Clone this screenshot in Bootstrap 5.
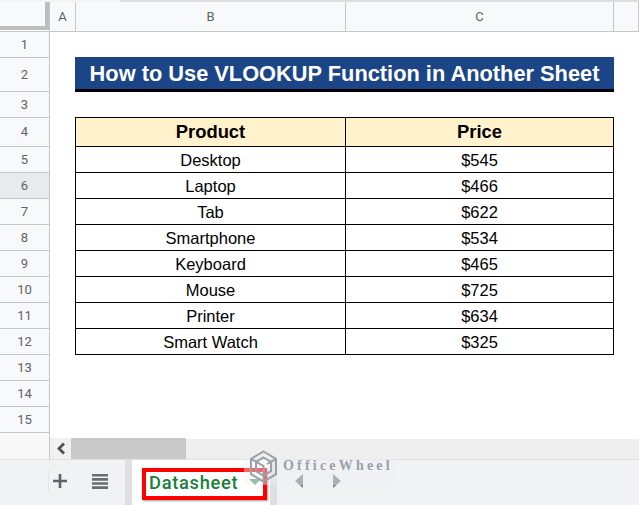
<!DOCTYPE html>
<html lang="en">
<head>
<meta charset="utf-8">
<title>Datasheet</title>
<link href="https://cdn.jsdelivr.net/npm/bootstrap@5.3.0/dist/css/bootstrap.min.css" rel="stylesheet">
<style>
html,body{margin:0;height:505px;width:639px;overflow:hidden;background:#fff}
body{font-family:"Liberation Sans",Arial,sans-serif}
.shell{width:639px;height:505px;position:relative;overflow:hidden}
.topedge{height:2px}
.topedge-left{width:120px;background:#f4f4f4}
.topedge-right{background:#dfdfdf}
.sheetgrid{display:grid;grid-template-columns:50px 26px 270px 268px 25px;grid-template-rows:30px 26px 34px 26px 29px repeat(8,26px) 26px 26px 26px 6px;height:436px}
.sheetgrid>div{display:flex;align-items:center;justify-content:center;min-width:0}
.sheetgrid>.corner{background:#fff;border-right:1px solid #c7c7c7;border-bottom:1px solid #c7c7c7;align-items:flex-start;justify-content:flex-start}
.corner-inner{width:49px;height:28px;background:#f8f9fa;border-right:4px solid #bdbdbd;border-bottom:4px solid #bdbdbd}
.colh,.rowh{background:#f8f9fa;border-right:1px solid #c7c7c7;border-bottom:1px solid #c7c7c7;color:#5f6368;font-size:13px;font-family:"Roboto","Liberation Sans",sans-serif}
.rowh.sel{background:#e8eaed}
.blank{background:#fff}
.sheetgrid>.banner{grid-column:span 2;background:#1c4587;color:#fff;font-weight:700;font-size:21.8px;border-bottom:3px solid #000;white-space:nowrap;margin:-1px 0 0 -1px;padding-top:3px;z-index:1}
.sheetgrid>.headcell{background:#fff2cc;font-weight:700;font-size:18.4px;color:#000;border:1px solid #000;margin-top:-1px;z-index:1}
.sheetgrid>.datacell{font-size:16.5px;color:#000;border:1px solid #000;border-top:0;padding-top:1px;z-index:1}
.sheetgrid>.lead-cell{margin-left:-1px}
.sheetgrid>.headcell+.headcell,.sheetgrid>.datacell+.datacell{border-left:0}
.scrollrow{height:21px;background:#eee}
.scrollgap{width:50px;background:#f8f8f8;border-right:1px solid #c7c7c7}
.scrollarrow{width:21px;background:#f1f1f1}
.scrollthumb{width:115px;background:#c9c9c9}
.tabbar{height:46px;background:#f0f2f4;border-top:1px solid #e0e0e0;padding-top:0}
.tabtools{width:125px;height:100%;padding:0 0 3px 53px;gap:25px;position:relative}
.tabmark{width:1px;height:21px;background:#dbe6f4;position:absolute;left:48px;top:10px}
.tabspacer{width:7px;background:#dedfe0;align-self:stretch}
.sheettab{width:138px;align-self:stretch;background:#fff;padding:9px 0 0 17px;color:#188038;font-size:18.3px;font-weight:500;line-height:28px;font-family:"Roboto","Liberation Sans",sans-serif;letter-spacing:.7px}
.caret-tab{width:0;height:0;border-left:6px solid transparent;border-right:6px solid transparent;border-top:6px solid #4fa066;margin:10px 0 0 11px}
.redframe{position:absolute;left:142px;top:468px;width:125px;height:32px;border:4px solid #f00;box-shadow:1px 1px 2px #999;pointer-events:none}
.navarrows{gap:30px;padding:0 0 3px 18px;height:100%}
.mark-wm{position:absolute;left:244px;top:447px;width:150px;height:38px;background:rgba(240,241,243,.42);gap:5px;padding-left:5px}
.wm-text{font-family:"Liberation Serif",serif;font-size:14px;letter-spacing:3.2px;color:#8d929b;font-weight:700;opacity:.85;position:relative;top:-1px}
</style>
</head>
<body>
<div class="shell">
<div class="topedge d-flex"><div class="topedge-left"></div><div class="topedge-right flex-fill"></div></div>
<div class="sheetgrid">
<div class="corner"><div class="corner-inner"></div></div><div class="colh">A</div><div class="colh">B</div><div class="colh">C</div><div class="colh"></div>
<div class="rowh">1</div><div class="blank"></div><div class="blank"></div><div class="blank"></div><div class="blank"></div>
<div class="rowh">2</div><div class="blank"></div><div class="banner">How to Use VLOOKUP Function in Another Sheet</div><div class="blank"></div>
<div class="rowh">3</div><div class="blank"></div><div class="blank"></div><div class="blank"></div><div class="blank"></div>
<div class="rowh">4</div><div class="blank"></div><div class="headcell lead-cell">Product</div><div class="headcell">Price</div><div class="blank"></div>
<div class="rowh">5</div><div class="blank"></div><div class="datacell lead-cell">Desktop</div><div class="datacell">$545</div><div class="blank"></div>
<div class="rowh sel">6</div><div class="blank"></div><div class="datacell lead-cell">Laptop</div><div class="datacell">$466</div><div class="blank"></div>
<div class="rowh">7</div><div class="blank"></div><div class="datacell lead-cell">Tab</div><div class="datacell">$622</div><div class="blank"></div>
<div class="rowh">8</div><div class="blank"></div><div class="datacell lead-cell">Smartphone</div><div class="datacell">$534</div><div class="blank"></div>
<div class="rowh">9</div><div class="blank"></div><div class="datacell lead-cell">Keyboard</div><div class="datacell">$465</div><div class="blank"></div>
<div class="rowh">10</div><div class="blank"></div><div class="datacell lead-cell">Mouse</div><div class="datacell">$725</div><div class="blank"></div>
<div class="rowh">11</div><div class="blank"></div><div class="datacell lead-cell">Printer</div><div class="datacell">$634</div><div class="blank"></div>
<div class="rowh">12</div><div class="blank"></div><div class="datacell lead-cell">Smart Watch</div><div class="datacell">$325</div><div class="blank"></div>
<div class="rowh">13</div><div class="blank"></div><div class="blank"></div><div class="blank"></div><div class="blank"></div>
<div class="rowh">14</div><div class="blank"></div><div class="blank"></div><div class="blank"></div><div class="blank"></div>
<div class="rowh">15</div><div class="blank"></div><div class="blank"></div><div class="blank"></div><div class="blank"></div>
<div class="rowh"></div><div class="blank"></div><div class="blank"></div><div class="blank"></div><div class="blank"></div>
</div>
<div class="scrollrow d-flex">
<div class="scrollgap"></div>
<div class="scrollarrow d-flex align-items-center justify-content-center"><svg width="10" height="13" viewBox="0 0 10 13"><path d="M8 1.500 3 6.500l5 5" fill="none" stroke="#505050" stroke-width="2.800"/></svg></div>
<div class="scrollthumb"></div>
</div>
<div class="tabbar d-flex align-items-center">
<div class="tabtools d-flex align-items-center">
<span class="tabmark"></span>
<svg width="14" height="14" viewBox="0 0 14 14"><path d="M5.700 0h2.600v5.700H14v2.600H8.300V14H5.700V8.300H0V5.700h5.700z" fill="#5f6368"/></svg>
<svg width="16" height="15" viewBox="0 0 16 15"><path d="M0 0h16v2.600H0zM0 4.100h16v2.600H0zM0 8.200h16v2.600H0zM0 12.300h16v2.600H0z" fill="#6a6d70"/></svg>
</div>
<div class="tabspacer"></div>
<div class="sheettab d-flex align-items-start"><span>Datasheet</span><span class="caret-tab"></span></div>
<div class="tabspacer"></div>
<div class="navarrows d-flex align-items-center">
<svg width="8" height="14" viewBox="0 0 8 14"><path d="M8 0v14L0 7z" fill="#7d8084"/></svg>
<svg width="8" height="14" viewBox="0 0 8 14"><path d="M0 0v14l8-7z" fill="#7d8084"/></svg>
</div>
</div>
<div class="redframe"></div>
<div class="mark-wm d-flex align-items-center">
<svg width="29" height="33" viewBox="0 0 29 33"><g fill="none" stroke="#9aa0a8" stroke-width="2"><path d="M14.500 1.500 27 8.800v15.400l-12.500 7.300L2 24.200V8.800z"/><path d="M14.500 7.500 22 11.800v9.400l-7.500 4.300L7 21.200v-9.400z"/><path d="M2 8.800 14.500 16v15.500M27 8.800 18 14"/></g></svg>
<span class="wm-text">OfficeWheel</span>
</div>
</div>
</body>
</html>
